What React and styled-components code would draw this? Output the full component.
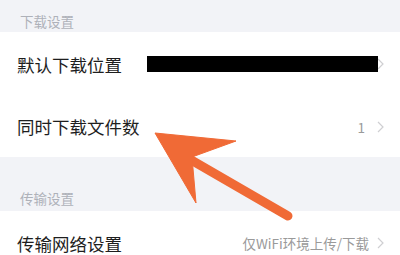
import React from "react";
import styled, { createGlobalStyle } from "styled-components";

const Global = createGlobalStyle`
  html, body { margin: 0; padding: 0; background: #fff; overflow: hidden; }
  body { font-family: "Noto Sans CJK SC", "Noto Sans", sans-serif; }
`;

const Page = styled.div`
  position: relative;
  width: 400px;
  height: 255px;
  overflow: hidden;
  background: #fff;
  display: flex;
  flex-direction: column;
`;

const SectionHeader = styled.div`
  flex: none;
  height: ${(p) => p.$height}px;
  background: #f2f3f7;
  display: flex;
  align-items: flex-end;
  padding: 0 0 ${(p) => p.$pb}px 20px;
  box-sizing: border-box;
  font-size: 13.5px;
  line-height: 16px;
  color: #aeb1b9;
`;

const Row = styled.div`
  position: relative;
  flex: none;
  height: ${(p) => p.$height}px;
  display: flex;
  align-items: center;
  justify-content: space-between;
  padding: 0 16px 0 17px;
  box-sizing: border-box;
  background: #fff;
`;

const Label = styled.span`
  font-size: 17.5px;
  color: #1e1e1e;
  transform: translateY(${(p) => p.$dy || 0}px);
`;

const Right = styled.div`
  display: flex;
  align-items: center;
  gap: ${(p) => p.$gap}px;
`;

const Value = styled.span`
  font-size: 13.5px;
  color: #9a9a9a;
`;

const Redaction = styled.div`
  position: absolute;
  left: 147px;
  top: 24px;
  width: 231px;
  height: 16px;
  background: #000;
`;

const Overlay = styled.svg`
  position: absolute;
  left: 0;
  top: 0;
  pointer-events: none;
`;

const Chevron = () => (
  <svg width="7" height="12" viewBox="0 0 7 12">
    <path d="M1 1 L6 6 L1 11" fill="none" stroke="#cfcfd2" strokeWidth="1.2" />
  </svg>
);

export default function App() {
  return (
    <>
      <Global />
      <Page>
        <SectionHeader $height={32} $pb={3}>下载设置</SectionHeader>
        <Row $height={64}>
          <Label $dy={0}>默认下载位置</Label>
          <Right $gap={8}>
            <Chevron />
          </Right>
          <Redaction />
        </Row>
        <Row $height={61}>
          <Label $dy={0}>同时下载文件数</Label>
          <Right $gap={12}>
            <Value>1</Value>
            <Chevron />
          </Right>
        </Row>
        <SectionHeader $height={54} $pb={5}>传输设置</SectionHeader>
        <Row $height={64}>
          <Label $dy={0}>传输网络设置</Label>
          <Right $gap={8}>
            <Value>仅WiFi环境上传/下载</Value>
            <Chevron />
          </Right>
        </Row>
        <Overlay width="400" height="255" viewBox="0 0 400 255">
          <line x1="186" y1="157" x2="288" y2="216" stroke="#f06a36" strokeWidth="9" strokeLinecap="round" />
          <polygon points="155,133 236,141 192,157 196,203" fill="#f06a36" strokeLinejoin="round" stroke="#f06a36" strokeWidth="1" />
        </Overlay>
      </Page>
    </>
  );
}
